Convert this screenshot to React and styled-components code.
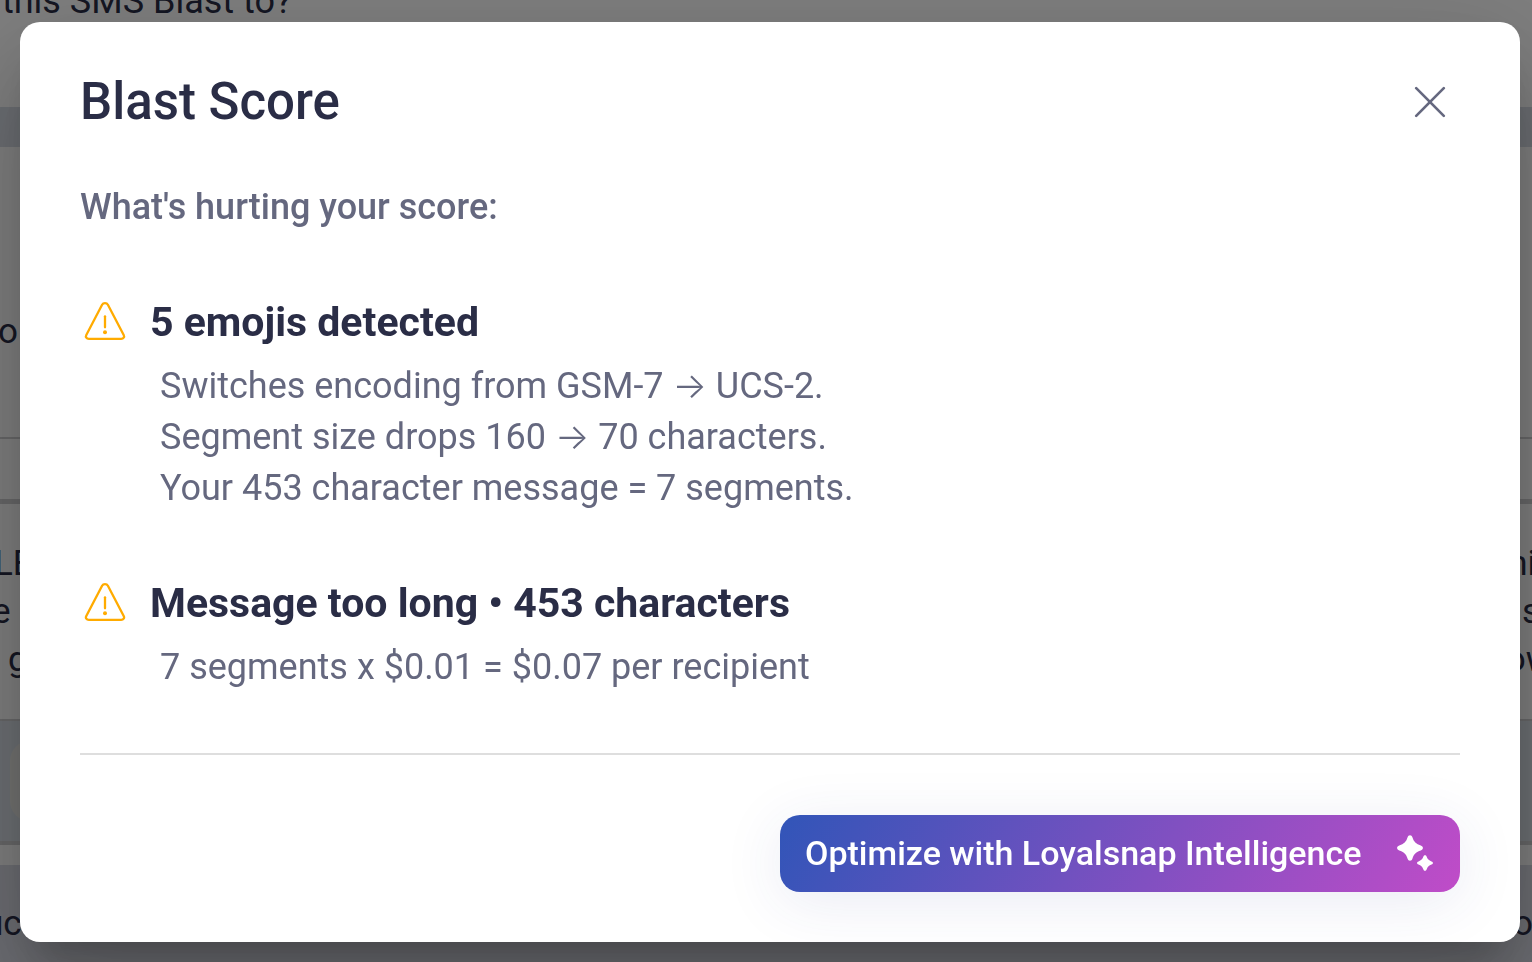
import React, { useState } from "react";
import styled, { createGlobalStyle } from "styled-components";

const GlobalStyle = createGlobalStyle`
	* {
		box-sizing: border-box;
	}
	body {
		margin: 0;
		overflow: hidden;
		background-color: #dadce6;
		font-family: Roboto, "Liberation Sans", sans-serif;
		color: #2a2d46;
	}
`;

const Page = styled.main`
	margin: 0 -20px;
`;

const Section = styled.section`
	height: ${(props) => props.$height}px;
	display: flex;
	flex-direction: column;
	justify-content: ${(props) => props.$align || "flex-start"};
	padding-top: ${(props) => props.$top || 0}px;
	background-color: ${(props) => props.$bg || "white"};
	border-bottom: ${(props) => props.$line || 0}px solid #d0d0d2;
`;

const Question = styled.p`
	margin: -20px 22px 0;
	font-size: 36px;
	line-height: 42px;
`;

const Line = styled.p`
	display: flex;
	justify-content: space-between;
	margin: 0;
	padding: 0 ${(props) => props.$end || 0}px 0 ${(props) => props.$start}px;
	font-size: 35px;
	line-height: 48px;
`;

const Field = styled.div`
	height: 80px;
	margin: 0 60px 0 30px;
	border-radius: 20px;
	background-color: #e8e8e4;
`;

const Backdrop = styled.div`
	position: fixed;
	inset: 0;
	display: flex;
	padding: 22px 12px 20px 20px;
	background-color: rgba(0, 0, 0, 0.5);
`;

const Modal = styled.div`
	flex: 1;
	padding: 50px 60px;
	border-radius: 20px;
	background-color: white;
	box-shadow: 0 28px 38px -18px rgba(0, 0, 0, 0.2),
		0 60px 95px 8px rgba(0, 0, 0, 0.14),
		0 22px 115px 20px rgba(0, 0, 0, 0.12);
`;

const Header = styled.header`
	display: flex;
	align-items: center;
	justify-content: space-between;
`;

const Title = styled.h1`
	margin: 0;
	font-size: 51px;
	font-weight: 500;
	line-height: 60px;
`;

const CloseButton = styled.button`
	display: flex;
	padding: 10px;
	border: none;
	background: none;
	color: #65687f;
	cursor: pointer;
`;

const Subtitle = styled.h2`
	margin: 50px 0 65px;
	font-size: 36px;
	font-weight: 500;
	line-height: 50px;
	color: #65687f;
`;

const Issues = styled.div`
	display: flex;
	flex-direction: column;
	gap: 64px;
	margin-bottom: 60px;
`;

const IssueHeader = styled.div`
	display: flex;
	align-items: center;
	gap: 20px;
	margin-bottom: 14px;
`;

const IssueTitle = styled.h3`
	margin: 0;
	font-size: 41px;
	font-weight: 700;
	line-height: 50px;
`;

const Detail = styled.p`
	margin: 0;
	padding-left: 80px;
	font-size: 36px;
	line-height: 51px;
	color: #65687f;
`;

const Arrow = styled.span`
	font-family: Inter, sans-serif;
	font-weight: 300;
	line-height: 1;
`;

const Footer = styled.footer`
	display: flex;
	justify-content: flex-end;
	padding-top: 60px;
	border-top: 2px solid #dedede;
`;

const OptimizeButton = styled.button`
	display: flex;
	align-items: center;
	justify-content: space-between;
	width: 680px;
	height: 77px;
	padding: 0 25px 2px;
	border: none;
	border-radius: 20px;
	background: linear-gradient(120deg, #3155b8, #c04cc8);
	box-shadow: 0 10px 60px rgba(49, 60, 150, 0.1);
	color: white;
	font-family: inherit;
	font-size: 34px;
	font-weight: 500;
	cursor: pointer;
`;

const CloseIcon = () => (
	<svg width="40" height="40" viewBox="0 0 40 40" fill="none">
		<path
			d="M6.2 6.2 33.8 33.8M33.8 6.2 6.2 33.8"
			stroke="currentColor"
			strokeWidth="2.6"
			strokeLinecap="round"
		/>
	</svg>
);

const WarningIcon = () => (
	<svg width="50" height="50" viewBox="0 0 50 50" fill="none">
		<path
			d="M22.1 7.7C23.3 5.5 26.7 5.5 27.9 7.7L43.7 38C44.8 40.1 43.4 41.8 41.2 41.8H8.8C6.6 41.8 5.2 40.1 6.3 38Z"
			stroke="#ffab00"
			strokeWidth="2.3"
			strokeLinejoin="round"
		/>
		<path
			d="M25 19.3V30.3"
			stroke="#ffab00"
			strokeWidth="2.3"
			strokeLinecap="round"
		/>
		<circle cx="25" cy="35.2" r="2" fill="#ffab00" />
	</svg>
);

const SparkleIcon = () => (
	<svg width="40" height="40" viewBox="0 0 40 40" fill="white">
		<path d="M15 2.2C16.2 2.2 17 3 17.4 4.2C18.6 8.6 21.2 11.3 25.8 12.5C27 12.9 27.9 13.7 27.9 15C27.9 16.2 27 17 25.8 17.4C21.2 18.7 18.6 21.3 17.4 25.8C17 27 16.2 27.8 15 27.8C13.8 27.8 13 27 12.6 25.8C11.4 21.3 8.8 18.7 4.2 17.4C3 17 2.1 16.2 2.1 15C2.1 13.7 3 12.9 4.2 12.5C8.8 11.3 11.4 8.6 12.6 4.2C13 3 13.8 2.2 15 2.2Z" />
		<path d="M30 22.2C30.8 22.2 31.3 22.7 31.6 23.5C32.4 26 33.9 27.5 36.5 28.4C37.4 28.7 37.9 29.2 37.9 30C37.9 30.8 37.4 31.3 36.5 31.6C33.9 32.5 32.4 34 31.6 36.5C31.3 37.3 30.8 37.8 30 37.8C29.2 37.8 28.7 37.3 28.4 36.5C27.6 34 26.1 32.5 23.5 31.6C22.6 31.3 22.1 30.8 22.1 30C22.1 29.2 22.6 28.7 23.5 28.4C26.1 27.5 27.6 26 28.4 23.5C28.7 22.7 29.2 22.2 30 22.2Z" />
	</svg>
);

const App = () => {
	const [open, setOpen] = useState(true);

	return (
		<>
			<GlobalStyle />
			<Page>
				<Section $height={107}>
					<Question>this SMS Blast to?</Question>
				</Section>
				<Section $height={40} $bg="#d8dde6" />
				<Section $height={292} $line={2} $top={80} $align="center">
					<Line $start={18}>o</Line>
				</Section>
				<Section $height={65} $line={5} />
				<Section $height={217} $line={2} $align="center">
					<Line $start={14} $end={16}>
						<span>LE</span>
						<span>ni</span>
					</Line>
					<Line $start={12} $end={12}>
						<span>e</span>
						<span>s</span>
					</Line>
					<Line $start={28}>
						<span>g</span>
						<span>ow</span>
					</Line>
				</Section>
				<Section $height={124} $line={4} $bg="#dae0e8" $align="center">
					<Field />
				</Section>
				<Section $height={20} />
				<Section $height={117} $bg="#dadce6" $align="center">
					<Line $start={4} $end={19}>
						<span>uc</span>
						<span>o</span>
					</Line>
				</Section>
			</Page>
			{open && (
				<Backdrop>
					<Modal role="dialog" aria-labelledby="score-title">
						<Header>
							<Title id="score-title">Blast Score</Title>
							<CloseButton aria-label="Close" onClick={() => setOpen(false)}>
								<CloseIcon />
							</CloseButton>
						</Header>
						<Subtitle>What's hurting your score:</Subtitle>
						<Issues>
							<section>
								<IssueHeader>
									<WarningIcon />
									<IssueTitle>5 emojis detected</IssueTitle>
								</IssueHeader>
								<Detail>
									Switches encoding from GSM-7 <Arrow>→</Arrow> UCS-2.
								</Detail>
								<Detail>
									Segment size drops 160 <Arrow>→</Arrow> 70 characters.
								</Detail>
								<Detail>Your 453 character message = 7 segments.</Detail>
							</section>
							<section>
								<IssueHeader>
									<WarningIcon />
									<IssueTitle>Message too long • 453 characters</IssueTitle>
								</IssueHeader>
								<Detail>7 segments x $0.01 = $0.07 per recipient</Detail>
							</section>
						</Issues>
						<Footer>
							<OptimizeButton>
								Optimize with Loyalsnap Intelligence
								<SparkleIcon />
							</OptimizeButton>
						</Footer>
					</Modal>
				</Backdrop>
			)}
		</>
	);
};

export default App;
